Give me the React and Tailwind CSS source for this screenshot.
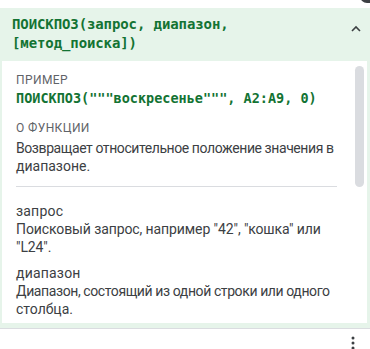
import React from "react";

const mono = { fontFamily: '"DejaVu Sans Mono", "Liberation Mono", monospace' };

export default function App() {
  return (
    <div
      className="relative w-[370px] h-[349px] bg-white overflow-hidden"
      style={{ fontFamily: 'Roboto, "Noto Sans", Arial, sans-serif' }}
    >
      <div className="absolute left-[360px] top-[-11px] w-[16px] h-[14px] rounded-full bg-[#3c4043]" />
      <div className="h-[8px]" />
      <div className="bg-[#e6f4ea] pb-[5px] border-b border-[#dadce0]">
        <div className="flex items-start justify-between pl-[12px] pr-[8px] pt-[7px] pb-[8px] h-[53px]">
          <div
            className="text-[14px] leading-[19px] font-bold text-[#137333] tracking-[-0.1px]"
            style={mono}
          >
            ПОИСКПОЗ(запрос, диапазон,
            <br />
            [метод_поиска])
          </div>
          <svg width="12" height="8" viewBox="0 0 12 8" className="mt-[10px]">
            <path d="M2 6 L6 2 L10 6" fill="none" stroke="#3c4043" strokeWidth="1.6" />
          </svg>
        </div>
        <div className="relative ml-[2px] mr-[3px] h-[262px] bg-white pl-[14px] pr-[30px] pt-[11px]">
          <div className="absolute left-[353px] top-[5px] w-[9px] h-[121px] rounded-full bg-[#dadce0]" />
          <div className="text-[12px] leading-[16px] text-[#5f6368] tracking-[0.4px]">ПРИМЕР</div>
          <div
            className="text-[13.5px] leading-[20px] font-bold text-[#137333] whitespace-nowrap"
            style={mono}
          >
            ПОИСКПОЗ("""воскресенье""", A2:A9, 0)
          </div>
          <div className="mt-[12px] text-[12px] leading-[16px] text-[#5f6368] tracking-[0.4px]">
            О ФУНКЦИИ
          </div>
          <div className="mt-[3px] text-[14px] leading-[18px] text-[#3c4043] whitespace-nowrap">
            <span className="tracking-[-0.42px]">Возвращает относительное положение значения в</span>
            <br />
            диапазоне.
          </div>
          <div className="mt-[11px] h-px bg-[#dadce0]" />
          <div className="mt-[15px] text-[14px] leading-[18px] text-[#3c4043] tracking-[0.2px]">запрос</div>
          <div className="text-[14px] leading-[18px] text-[#3c4043] whitespace-nowrap tracking-[-0.1px]">
            Поисковый запрос, например "42", "кошка" или
            <br />
            "L24".
          </div>
          <div className="mt-[8px] text-[14px] leading-[18px] text-[#3c4043] tracking-[0.2px]">диапазон</div>
          <div className="text-[14px] leading-[18px] text-[#3c4043] whitespace-nowrap">
            <span className="tracking-[-0.4px]">Диапазон, состоящий из одной строки или одного</span>
            <br />
            столбца.
          </div>
        </div>
      </div>
      <div className="flex justify-end pr-[15px] pt-[7px]">
        <svg width="4" height="16" viewBox="0 0 4 16">
          <circle cx="2" cy="2" r="1.5" fill="#3c4043" />
          <circle cx="2" cy="7" r="1.5" fill="#3c4043" />
          <circle cx="2" cy="12" r="1.5" fill="#3c4043" />
        </svg>
      </div>
    </div>
  );
}
